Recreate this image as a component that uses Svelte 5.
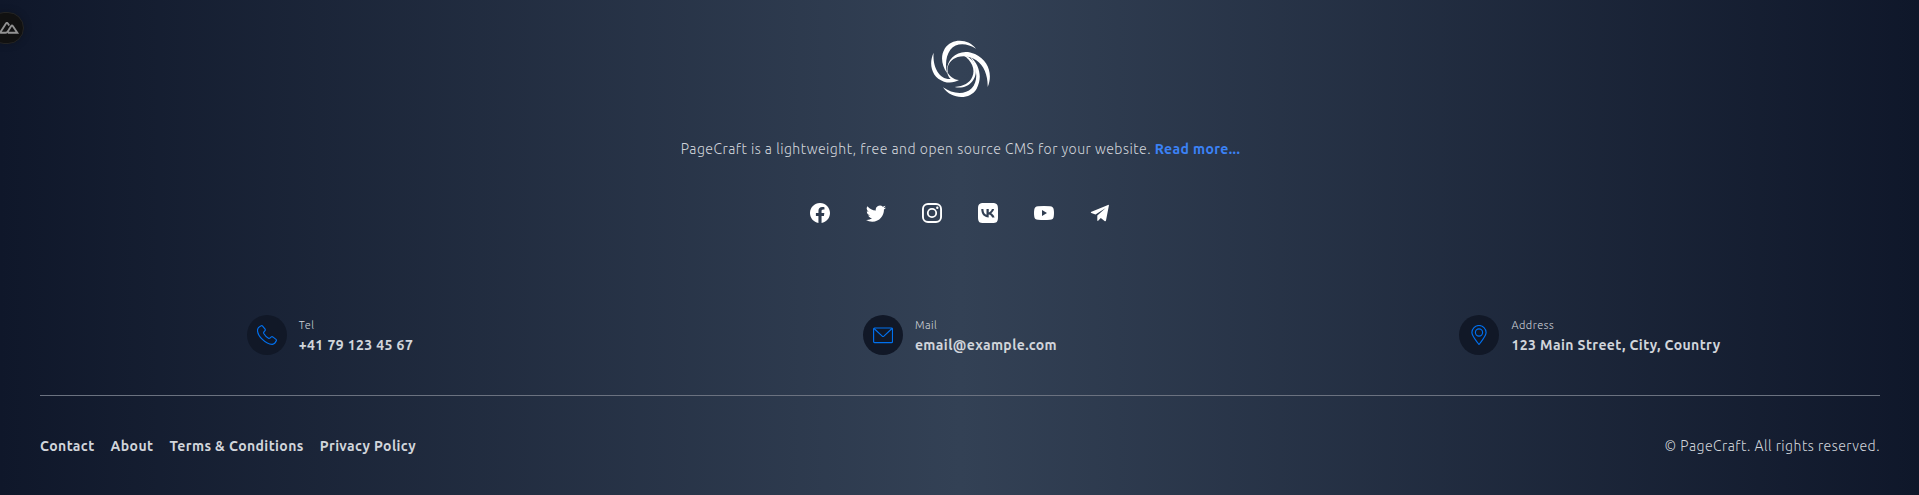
<script>
  const socials = [
    { name: 'Facebook', box: '0 0 16 16', d: 'M16 8.049c0-4.446-3.582-8.05-8-8.05C3.58 0-.002 3.603-.002 8.05c0 4.017 2.926 7.347 6.75 7.951v-5.625h-2.03V8.05H6.75V6.275c0-2.017 1.195-3.131 3.022-3.131.876 0 1.791.157 1.791.157v1.98h-1.009c-.993 0-1.303.621-1.303 1.258v1.51h2.218l-.354 2.326H9.25V16c3.824-.604 6.75-3.934 6.75-7.951z' },
    { name: 'Twitter', box: '0 0 16 16', d: 'M5.026 15c6.038 0 9.341-5.003 9.341-9.334 0-.14 0-.282-.006-.422A6.685 6.685 0 0 0 16 3.542a6.658 6.658 0 0 1-1.889.518 3.301 3.301 0 0 0 1.447-1.817 6.533 6.533 0 0 1-2.087.793A3.286 3.286 0 0 0 7.875 6.03a9.325 9.325 0 0 1-6.767-3.429 3.289 3.289 0 0 0 1.018 4.382A3.323 3.323 0 0 1 .64 6.575v.045a3.288 3.288 0 0 0 2.632 3.218 3.203 3.203 0 0 1-.865.115 3.23 3.23 0 0 1-.614-.057 3.283 3.283 0 0 0 3.067 2.277A6.588 6.588 0 0 1 .78 13.58a6.32 6.32 0 0 1-.78-.045A9.344 9.344 0 0 0 5.026 15z' },
    { name: 'Instagram', box: '0 0 20 20', d: 'M6 0h8a6 6 0 0 1 6 6v8a6 6 0 0 1-6 6H6a6 6 0 0 1-6-6V6a6 6 0 0 1 6-6zM6 1.900A4.100 4.100 0 0 0 1.900 6v8A4.100 4.100 0 0 0 6 18.100h8a4.100 4.100 0 0 0 4.100-4.100V6A4.100 4.100 0 0 0 14 1.900zM10 4.900a5.100 5.100 0 1 1 0 10.200a5.100 5.100 0 0 1 0-10.200zM10 6.700a3.300 3.300 0 1 0 0 6.600a3.300 3.300 0 0 0 0-6.600zM15.300 3.500a1.200 1.200 0 1 1 0 2.400a1.200 1.200 0 0 1 0-2.400z' },
    { name: 'VK', box: '0 0 24 24', d: 'M7 0h10c5.500 0 7 1.500 7 7v10c0 5.500-1.500 7-7 7H7c-5.500 0-7-1.500-7-7V7c0-5.500 1.500-7 7-7zM12.800 17.300V13.700c2.100.2 3.600 1.700 4.200 3.600h2.900c-.8-2.800-2.800-4.400-4.100-5 1.300-.8 3.100-2.600 3.500-5h-2.600c-.6 2-2.200 3.800-3.800 4v-4h-2.700v6.900c-1.600-.4-3.600-2.300-3.700-6.900H3.900c.1 6.300 3.400 10 8.900 10z' },
    { name: 'YouTube', box: '0 0 20 20', d: 'M4 3.300Q10 2.800 16 3.300Q19.400 3.500 19.700 6.500Q20.300 10 19.700 13.700Q19.400 16.500 16 16.800Q10 17.300 4 16.800Q.6 16.500 .3 13.700Q-.3 10 .3 6.500Q.6 3.500 4 3.300zM8 7v6l5-3z' },
    { name: 'Telegram', box: '0 0 20 20', d: 'M18.600 1.800L.9 9.100Q.6 9.700 1.300 10L5.500 11.400L15.700 4.900L7.300 12.400V17.400Q7.700 18.300 8.400 17.500L10.800 15.100L14.900 18.200Q15.700 18.600 16 17.500L18.900 2.500Q19 1.800 18.600 1.800z' }
  ];

  const contacts = [
    { kind: 'tel', label: 'Tel', value: '+41 79 123 45 67' },
    { kind: 'mail', label: 'Mail', value: 'email@example.com' },
    { kind: 'address', label: 'Address', value: '123 Main Street, City, Country' }
  ];

  const links = ['Contact', 'About', 'Terms & Conditions', 'Privacy Policy'];
</script>

<footer>
  <div class="devtools">
    <svg width="20" height="12" viewBox="0 0 20 12"><path d="M1 10.800Q.1 10.800.5 10L6.100 1.300Q6.900.5 7.700 1.300L9.200 3.500M1 10.800H5.500C7.500 10.800 8 9 8.700 8L11.200 4Q12 3 12.800 4L17.300 10.800H8" /></svg>
  </div>

  <svg class="logo" viewBox="30 28 186 180" aria-label="PageCraft">
    <path d="M168 57C148 28 96 22 74 57C60 81 66 109 81 130C75 105 78 77 91 60C108 38 141 39 168 57Z" />
    <path d="M81 130C76 88 117 52 165 73C206 92 219 135 203 172C204 140 193 108 169 92C150 79 130 77 113 82C92 89 80 107 83 126Z" />
    <path d="M41 69C25 101 34 144 72 156C89 161 105 158 117 151C100 149 88 140 80 123C84 139 88 145 93 148C54 151 37 106 41 69Z" />
    <path d="M69 173C94 210 150 212 170 177C188 144 179 105 151 81C173 117 175 155 155 176C132 199 95 191 69 173Z" />
    <path d="M104 172C142 181 173 151 167 115C163 95 147 78 130 77C155 92 167 121 157 141C149 160 131 169 104 172Z" />
  </svg>

  <p class="intro">PageCraft is a lightweight, free and open source CMS for your website. <a class="more">Read more...</a></p>

  <nav class="socials">
    {#each socials as s}
      <a aria-label={s.name}><svg viewBox={s.box} width="20" height="20"><path fill-rule="evenodd" d={s.d} /></svg></a>
    {/each}
  </nav>

  <section class="contacts">
    {#each contacts as c}
      <div class="contact">
        <span class="disc">
          <svg width="20" height="20" viewBox="0 0 20 20">
            {#if c.kind === 'tel'}
              <path d="M3.300 1.300L4.300 .8Q5 .4 5.600 1.100L8.100 4.200Q8.600 5 8 5.700L6.800 7.100Q6.400 7.700 6.800 8.500Q8.500 11.500 11.500 13.200Q12.300 13.600 12.900 13.100L14.300 11.900Q15 11.400 15.800 11.900L19 14.400Q19.700 15 19.300 15.800Q18.100 19 15.300 19.400C9 19.600 .2 10.900 .5 4.800Q.8 2.600 3.300 1.300Z" />
            {:else if c.kind === 'mail'}
              <rect x=".6" y="3" width="18.900" height="14.600" rx="1" /><path d="M1 3.500L9.200 11.100Q10 11.900 10.900 11.100L19 3.500" />
            {:else}
              <path d="M10 19.500C7.800 16.300 2.900 11.500 2.900 7.600A7.100 7.100 0 0 1 17.100 7.600C17.100 11.500 12.200 16.300 10 19.500Z" /><circle cx="10" cy="7.500" r="3.600" />
            {/if}
          </svg>
        </span>
        <div class="detail">
          <span class="label">{c.label}</span>
          <span class="value">{c.value}</span>
        </div>
      </div>
    {/each}
  </section>

  <div class="bottom">
    <nav class="links">
      {#each links as l}<a>{l}</a>{/each}
    </nav>
    <span>© PageCraft. All rights reserved.</span>
  </div>
</footer>

<style>
  footer {
    position: relative;
    box-sizing: border-box;
    height: 495px;
    padding: 39px 39px 0 40px;
    overflow: hidden;
    display: flex;
    flex-direction: column;
    align-items: center;
    background: linear-gradient(to right, #0f172a, #334155, #0f172a);
    color: #d1d5db;
    font: 300 14px/24px Ubuntu, "Noto Sans", sans-serif;
    letter-spacing: 0.480px;
    white-space: nowrap;
  }
  .devtools {
    position: absolute;
    left: -12px;
    top: 12px;
    width: 34px;
    height: 30px;
    border: 1px solid #242424;
    border-radius: 16px;
    background: #111;
    box-shadow: 0 0 8px #0003;
  }
  .devtools svg { position: absolute; left: 11px; top: 9px; fill: none; stroke: #929292; stroke-width: 1.900; }
  .logo { width: 62px; height: 60px; margin-left: 2px; fill: #fff; flex: none; }
  .intro { margin: 38px 0 0 1px; }
  .more { color: #3b82f6; font-weight: 600; letter-spacing: 0.4px; }
  .socials { display: flex; gap: 36px; margin-top: 42px; }
  .socials a, .socials svg { display: block; }
  .socials svg { fill: #fff; }
  .contacts { display: grid; grid-template-columns: 580px 680px 580px; margin-top: 92px; height: 40px; }
  .contact { display: flex; justify-content: center; gap: 12px; }
  .disc { width: 40px; height: 40px; border-radius: 50%; background: #111827; display: grid; place-items: center; }
  .disc svg { fill: none; stroke: #0070ef; stroke-width: 1.150; }
  .detail { display: flex; flex-direction: column; }
  .label { font-size: 11px; line-height: 20px; }
  .value { font-weight: 600; line-height: 20px; letter-spacing: 0.4px; }
  .bottom { align-self: stretch; display: flex; justify-content: space-between; margin-top: 40px; padding-top: 38px; border-top: 1px solid #6b7280; }
  .links { display: flex; gap: 16px; font-weight: 600; letter-spacing: 0.4px; }
</style>
